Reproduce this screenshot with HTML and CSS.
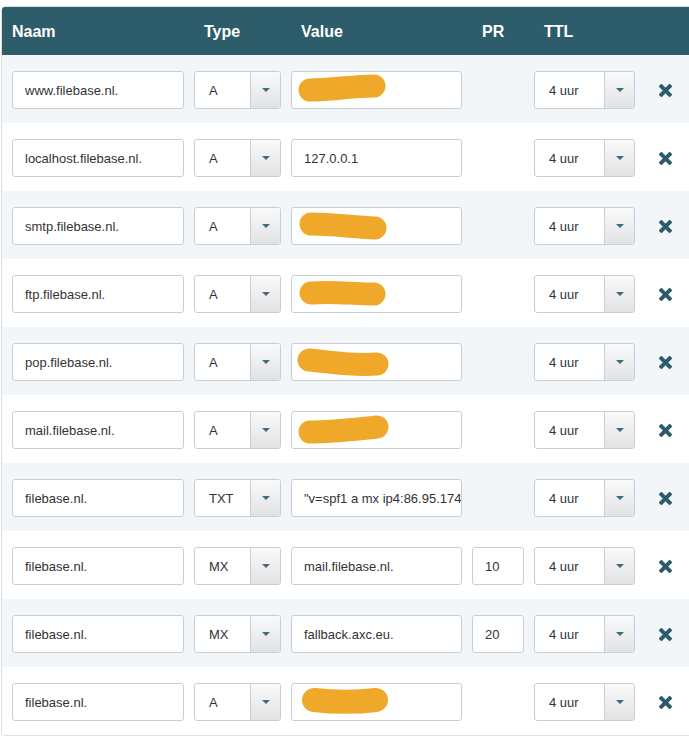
FILE: index.html
```html
<!DOCTYPE html>
<html lang="nl">
<head>
<meta charset="utf-8">
<title>DNS records</title>
<link rel="stylesheet" href="styles.css">
</head>
<body>
<div class="records">
  <div class="head">
    <div class="th th-first">Naam</div>
    <div class="th">Type</div>
    <div class="th">Value</div>
    <div class="th">PR</div>
    <div class="th">TTL</div>
    <div></div>
  </div>

  <div class="row alt">
    <div class="field">www.filebase.nl.</div>
    <div class="select"><span class="sel-text">A</span><span class="sel-btn"><span class="caret"></span></span></div>
    <div class="field redacted"><svg class="blob" viewBox="0 0 169 36" width="169" height="36"><path d="M18,18 C40,18 60,14 82,14"/></svg></div>
    <div></div>
    <div class="select"><span class="sel-text">4 uur</span><span class="sel-btn"><span class="caret"></span></span></div>
    <div class="del"><svg viewBox="0 0 13 13" width="13" height="13"><path d="M2.4,2.4 L10.6,10.6 M10.6,2.4 L2.4,10.6"/></svg></div>
  </div>

  <div class="row">
    <div class="field">localhost.filebase.nl.</div>
    <div class="select"><span class="sel-text">A</span><span class="sel-btn"><span class="caret"></span></span></div>
    <div class="field">127.0.0.1</div>
    <div></div>
    <div class="select"><span class="sel-text">4 uur</span><span class="sel-btn"><span class="caret"></span></span></div>
    <div class="del"><svg viewBox="0 0 13 13" width="13" height="13"><path d="M2.4,2.4 L10.6,10.6 M10.6,2.4 L2.4,10.6"/></svg></div>
  </div>

  <div class="row alt">
    <div class="field">smtp.filebase.nl.</div>
    <div class="select"><span class="sel-text">A</span><span class="sel-btn"><span class="caret"></span></span></div>
    <div class="field redacted"><svg class="blob" viewBox="0 0 169 36" width="169" height="36"><path d="M19,16 C40,16 60,19 83,20"/></svg></div>
    <div></div>
    <div class="select"><span class="sel-text">4 uur</span><span class="sel-btn"><span class="caret"></span></span></div>
    <div class="del"><svg viewBox="0 0 13 13" width="13" height="13"><path d="M2.4,2.4 L10.6,10.6 M10.6,2.4 L2.4,10.6"/></svg></div>
  </div>

  <div class="row">
    <div class="field">ftp.filebase.nl.</div>
    <div class="select"><span class="sel-text">A</span><span class="sel-btn"><span class="caret"></span></span></div>
    <div class="field redacted"><svg class="blob" viewBox="0 0 169 36" width="169" height="36"><path d="M19,17 C40,15 60,18 82,18"/></svg></div>
    <div></div>
    <div class="select"><span class="sel-text">4 uur</span><span class="sel-btn"><span class="caret"></span></span></div>
    <div class="del"><svg viewBox="0 0 13 13" width="13" height="13"><path d="M2.4,2.4 L10.6,10.6 M10.6,2.4 L2.4,10.6"/></svg></div>
  </div>

  <div class="row alt">
    <div class="field">pop.filebase.nl.</div>
    <div class="select"><span class="sel-text">A</span><span class="sel-btn"><span class="caret"></span></span></div>
    <div class="field redacted"><svg class="blob" viewBox="0 0 169 36" width="169" height="36"><path d="M17,16 C40,18 60,22 85,20"/></svg></div>
    <div></div>
    <div class="select"><span class="sel-text">4 uur</span><span class="sel-btn"><span class="caret"></span></span></div>
    <div class="del"><svg viewBox="0 0 13 13" width="13" height="13"><path d="M2.4,2.4 L10.6,10.6 M10.6,2.4 L2.4,10.6"/></svg></div>
  </div>

  <div class="row">
    <div class="field">mail.filebase.nl.</div>
    <div class="select"><span class="sel-text">A</span><span class="sel-btn"><span class="caret"></span></span></div>
    <div class="field redacted"><svg class="blob" viewBox="0 0 169 36" width="169" height="36"><path d="M18,20 C40,20 65,17 85,15"/></svg></div>
    <div></div>
    <div class="select"><span class="sel-text">4 uur</span><span class="sel-btn"><span class="caret"></span></span></div>
    <div class="del"><svg viewBox="0 0 13 13" width="13" height="13"><path d="M2.4,2.4 L10.6,10.6 M10.6,2.4 L2.4,10.6"/></svg></div>
  </div>

  <div class="row alt">
    <div class="field">filebase.nl.</div>
    <div class="select"><span class="sel-text">TXT</span><span class="sel-btn"><span class="caret"></span></span></div>
    <div class="field">"v=spf1 a mx ip4:86.95.174.0/24 ~all"</div>
    <div></div>
    <div class="select"><span class="sel-text">4 uur</span><span class="sel-btn"><span class="caret"></span></span></div>
    <div class="del"><svg viewBox="0 0 13 13" width="13" height="13"><path d="M2.4,2.4 L10.6,10.6 M10.6,2.4 L2.4,10.6"/></svg></div>
  </div>

  <div class="row">
    <div class="field">filebase.nl.</div>
    <div class="select"><span class="sel-text">MX</span><span class="sel-btn"><span class="caret"></span></span></div>
    <div class="field">mail.filebase.nl.</div>
    <div class="field">10</div>
    <div class="select"><span class="sel-text">4 uur</span><span class="sel-btn"><span class="caret"></span></span></div>
    <div class="del"><svg viewBox="0 0 13 13" width="13" height="13"><path d="M2.4,2.4 L10.6,10.6 M10.6,2.4 L2.4,10.6"/></svg></div>
  </div>

  <div class="row alt">
    <div class="field">filebase.nl.</div>
    <div class="select"><span class="sel-text">MX</span><span class="sel-btn"><span class="caret"></span></span></div>
    <div class="field">fallback.axc.eu.</div>
    <div class="field">20</div>
    <div class="select"><span class="sel-text">4 uur</span><span class="sel-btn"><span class="caret"></span></span></div>
    <div class="del"><svg viewBox="0 0 13 13" width="13" height="13"><path d="M2.4,2.4 L10.6,10.6 M10.6,2.4 L2.4,10.6"/></svg></div>
  </div>

  <div class="row">
    <div class="field">filebase.nl.</div>
    <div class="select"><span class="sel-text">A</span><span class="sel-btn"><span class="caret"></span></span></div>
    <div class="field redacted"><svg class="blob wide" viewBox="0 0 169 36" width="169" height="36"><path d="M22,16 C40,18 60,19 84,16"/></svg></div>
    <div></div>
    <div class="select"><span class="sel-text">4 uur</span><span class="sel-btn"><span class="caret"></span></span></div>
    <div class="del"><svg viewBox="0 0 13 13" width="13" height="13"><path d="M2.4,2.4 L10.6,10.6 M10.6,2.4 L2.4,10.6"/></svg></div>
  </div>
</div>
</body>
</html>
```

FILE: styles.css
```css
html, body {
  overflow: hidden;
}

body {
  margin: 6px 0 0 1px;
  background: #ffffff;
  font-family: "Liberation Sans", Arial, sans-serif;
}

.records {
  width: 720px;
  border: 1px solid #dcdfe2;
  border-radius: 4px;
  overflow: hidden;
  background: #ffffff;
}

.head,
.row {
  display: grid;
  grid-template-columns: 172px 87px 171px 52px 101px 1fr;
  column-gap: 10px;
  padding-left: 10px;
}

.head {
  height: 48px;
  align-items: center;
  background: #2d5c6a;
  color: #ffffff;
  font-size: 16px;
  font-weight: bold;
  padding-top: 1px;
  box-sizing: border-box;
}

.th {
  padding-left: 10px;
}

.th-first {
  padding-left: 0;
}

.row {
  height: 68px;
  box-sizing: border-box;
  padding-top: 16px;
  align-items: start;
  background: #ffffff;
}

.row.alt {
  background: #f3f6f9;
}

.field {
  height: 38px;
  box-sizing: border-box;
  display: flex;
  align-items: center;
  padding-left: 12px;
  border: 1px solid #c3d0da;
  border-radius: 3px;
  background: #ffffff;
  color: #333333;
  font-size: 13px;
  white-space: nowrap;
  overflow: hidden;
}

.field.redacted {
  padding-left: 0;
}

.blob {
  display: block;
}

.blob path {
  fill: none;
  stroke: #f0a82b;
  stroke-width: 23;
  stroke-linecap: round;
  stroke-linejoin: round;
}

.blob.wide path {
  stroke-width: 24;
}

.select {
  height: 38px;
  box-sizing: border-box;
  display: flex;
  border: 1px solid #c3d0da;
  border-radius: 3px;
  background: #ffffff;
  overflow: hidden;
  color: #333333;
  font-size: 13px;
}

.sel-text {
  flex: 1;
  display: flex;
  align-items: center;
  padding-left: 14px;
  white-space: nowrap;
}

.sel-btn {
  width: 30px;
  box-sizing: border-box;
  border-left: 1px solid #c3d0da;
  background: linear-gradient(#fafafa, #e1e2e3);
  display: flex;
  align-items: center;
  justify-content: center;
}

.caret {
  width: 0;
  height: 0;
  border-left: 4px solid transparent;
  border-right: 4px solid transparent;
  border-top: 4px solid #3d6a7d;
}

.del {
  height: 38px;
  display: flex;
  align-items: center;
  padding-left: 14px;
}

.del svg {
  display: block;
}

.del path {
  fill: none;
  stroke: #2d5c6a;
  stroke-width: 4;
  stroke-linecap: square;
}
```
